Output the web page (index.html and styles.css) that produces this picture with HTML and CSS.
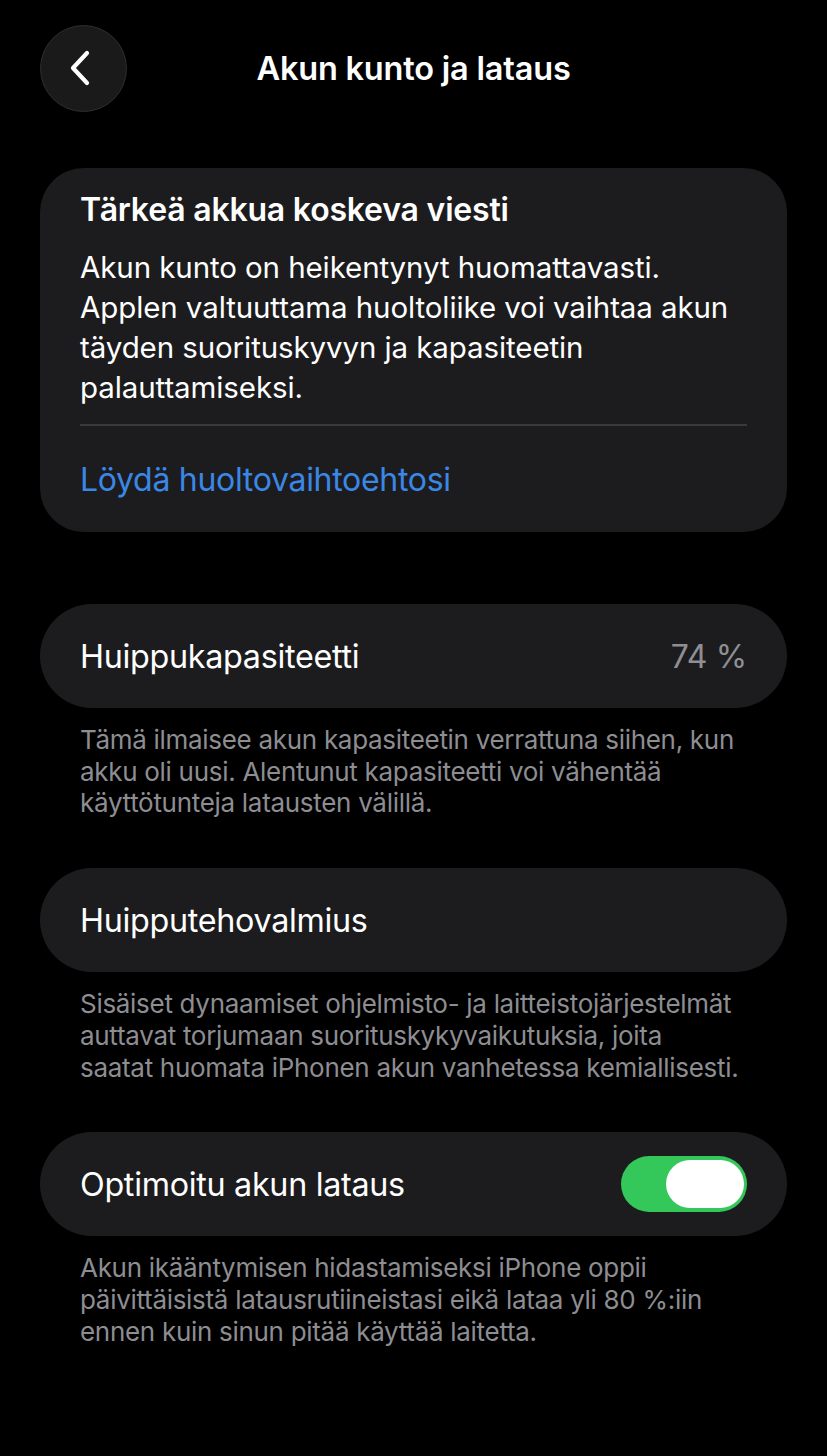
FILE: index.html
```html
<!DOCTYPE html>
<html lang="fi">
<head>
<meta charset="utf-8">
<title>Akun kunto ja lataus</title>
<link rel="stylesheet" href="styles.css">
</head>
<body>
<div class="page">
  <header class="header">
    <button class="back" aria-label="Takaisin">
      <svg width="30" height="40" viewBox="0 0 30 40"><path d="M21 5 L7 20 L21 35" fill="none" stroke="#fff" stroke-width="4.2" stroke-linecap="round" stroke-linejoin="round"/></svg>
    </button>
    <h1 class="title">Akun kunto ja lataus</h1>
  </header>

  <section class="card notice">
    <h2 class="notice-title">Tärkeä akkua koskeva viesti</h2>
    <p class="notice-body">Akun kunto on heikentynyt huomattavasti. Applen valtuuttama huoltoliike voi vaihtaa akun täyden suorituskyvyn ja kapasiteetin palauttamiseksi.</p>
    <div class="divider"></div>
    <a class="link" href="#">Löydä huoltovaihtoehtosi</a>
  </section>

  <section class="group first">
    <div class="card row">
      <span class="label">Huippukapasiteetti</span>
      <span class="value">74 %</span>
    </div>
    <p class="footnote">Tämä ilmaisee akun kapasiteetin verrattuna siihen, kun akku oli uusi. Alentunut kapasiteetti voi vähentää käyttötunteja latausten välillä.</p>
  </section>

  <section class="group">
    <div class="card row">
      <span class="label">Huipputehovalmius</span>
    </div>
    <p class="footnote">Sisäiset dynaamiset ohjelmisto- ja laitteistojärjestelmät auttavat torjumaan suorituskykyvaikutuksia, joita saatat&nbsp;huomata iPhonen akun vanhetessa kemiallisesti.</p>
  </section>

  <section class="group">
    <div class="card row">
      <span class="label">Optimoitu akun lataus</span>
      <span class="toggle"><span class="knob"></span></span>
    </div>
    <p class="footnote">Akun ikääntymisen hidastamiseksi iPhone oppii päivittäisistä latausrutiineistasi eikä lataa yli 80 %:iin ennen kuin sinun pitää käyttää laitetta.</p>
  </section>
</div>
</body>
</html>
```

FILE: styles.css
```css
html, body {
  margin: 0;
  padding: 0;
  background: #000;
}
body {
  font-family: Inter, "Noto Sans", "Liberation Sans", sans-serif;
  color: #fff;
}
.page {
  padding: 0 40px;
}
.header {
  display: flex;
  align-items: center;
  height: 86px;
  padding-top: 25px;
  position: relative;
}
.back {
  width: 87px;
  height: 87px;
  border-radius: 50%;
  background: #1a1a1b;
  border: 1.5px solid #2e2e30;
  display: flex;
  align-items: center;
  justify-content: center;
  padding: 0 6px 0 0;
  flex: none;
  position: relative;
  z-index: 1;
}
.title {
  position: absolute;
  left: -40px;
  right: -40px;
  top: 25px;
  height: 86px;
  margin: 0;
  display: flex;
  align-items: center;
  justify-content: center;
  font-size: 32.5px;
  font-weight: 600;
  letter-spacing: -0.2px;
}
.card {
  background: #1c1c1e;
}
.notice {
  margin-top: 57px;
  border-radius: 44px;
  padding: 22px 40px 32px 40px;
}
.notice-title {
  margin: 0;
  font-size: 32px;
  line-height: 40px;
  font-weight: 600;
  letter-spacing: -0.2px;
}
.notice-body {
  margin: 17px 0 0 0;
  font-size: 29.5px;
  line-height: 40px;
  font-weight: 400;
  letter-spacing: -0.1px;
}
.divider {
  height: 2px;
  background: #3a3a3c;
  margin: 17px 0 0 0;
}
.link {
  display: block;
  margin-top: 34px;
  color: #3b87e6;
  text-decoration: none;
  font-size: 32px;
  line-height: 40px;
  letter-spacing: -0.3px;
}
.group {
  margin-top: 49px;
}
.group.first {
  margin-top: 72px;
}
.row {
  height: 104px;
  border-radius: 52px;
  display: flex;
  align-items: center;
  justify-content: space-between;
  padding: 0 40px;
}
.label {
  font-size: 32.3px;
  letter-spacing: -0.3px;
}
.value {
  font-size: 32px;
  color: #8e8e93;
  letter-spacing: -0.3px;
}
.footnote {
  margin: 16px 0 0 0;
  padding: 0 40px;
  font-size: 26px;
  line-height: 31.7px;
  color: #8d8d92;
  letter-spacing: -0.3px;
}
.toggle {
  width: 126px;
  height: 56px;
  border-radius: 28px;
  background: #34c759;
  display: flex;
  align-items: center;
  justify-content: flex-end;
  padding: 0 3px;
  box-sizing: border-box;
}
.knob {
  width: 78px;
  height: 48px;
  border-radius: 24px;
  background: #fff;
}
```
